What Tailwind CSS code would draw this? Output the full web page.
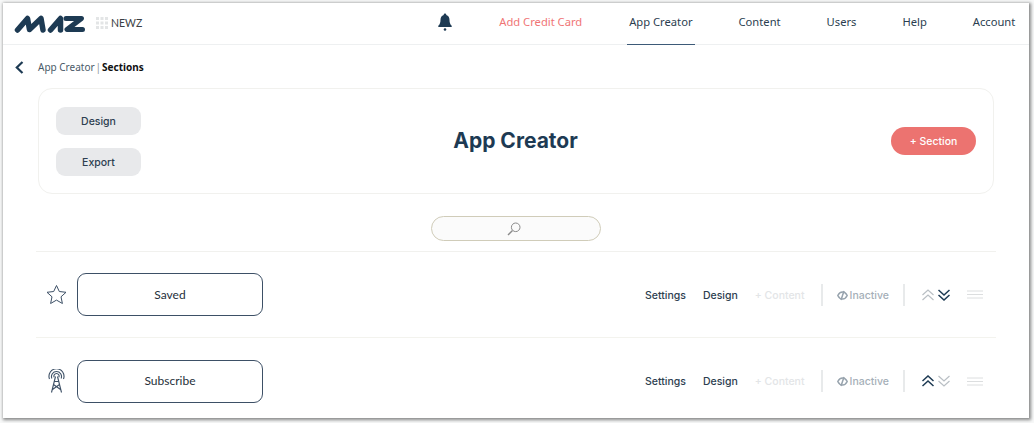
<!DOCTYPE html>
<html lang="en">
<head>
<meta charset="utf-8">
<title>App Creator</title>
<script src="https://cdn.jsdelivr.net/npm/@tailwindcss/browser@4"></script>
</head>
<body class="w-[1034px] h-[423px] overflow-hidden bg-[#f7f8f8] font-['Open_Sans',sans-serif]">
<div class="mt-[3px] ml-[3px] w-[1026px] h-[415px] overflow-hidden bg-white shadow-[1px_1px_3px_1px_rgba(0,0,0,0.45)]">

    <!-- top nav -->
    <header class="h-[41px] box-content border-b border-[#eef0f1] flex items-center pl-[11px]">
        <svg class="w-[71px] h-[18px]" viewBox="0 0 71 18" role="img" aria-label="MAZ logo" fill="none" stroke="#1d3a53" stroke-width="5.500" stroke-linecap="round" stroke-linejoin="round">
            <path d="M3.500 15 13.500 3.500 15.500 14.500 27 3.500 29 15"/>
            <path d="M36.500 15 46.500 3.500 46.500 15"/>
            <path d="M52 3.500H67.500L53 14.500H68.500" stroke-width="5"/>
        </svg>
        <svg class="ml-[11px] -mt-[1px] w-[12px] h-[12px]" viewBox="0 0 12 12" fill="#e3e5e6">
            <rect width="3" height="3"/><rect x="4.500" width="3" height="3"/><rect x="9" width="3" height="3"/>
            <rect y="4.500" width="3" height="3"/><rect x="4.500" y="4.500" width="3" height="3"/><rect x="9" y="4.500" width="3" height="3"/>
            <rect y="9" width="3" height="3"/><rect x="4.500" y="9" width="3" height="3"/><rect x="9" y="9" width="3" height="3"/>
        </svg>
        <span class="ml-[3px] text-[10.500px] text-[#3a3f44] font-['Lato',sans-serif]">NEWZ</span>

        <svg class="ml-[296px] w-[14px] h-[18px] -mt-[4px]" viewBox="0 0 14 18" fill="#1d3a53">
            <path d="M7 0.500c.8 0 1.300.6 1.300 1.400 2.200.6 3.200 2.500 3.200 4.900 0 3 .7 4.600 2.200 6v1.200H.3v-1.200c1.500-1.400 2.200-3 2.200-6 0-2.400 1-4.300 3.200-4.900C5.700 1.100 6.200.5 7 .5z"/>
            <circle cx="7" cy="16.500" r="1.300"/>
        </svg>

        <nav class="h-full flex items-center text-[11.200px] text-[#2b3e50] font-['Noto_Sans',sans-serif]">
            <a class="ml-[47px] -mt-[3px] text-[#f07575]">Add Credit Card</a>
            <a class="ml-[45px] self-start h-[42px] flex items-center px-[2px] pb-[3px] border-b border-[#3d5a78]">App Creator</a>
            <a class="ml-[44px] -mt-[3px]">Content</a>
            <a class="ml-[46px] -mt-[3px]">Users</a>
            <a class="ml-[46px] -mt-[3px]">Help</a>
            <a class="ml-[46px] -mt-[3px]">Account</a>
        </nav>
    </header>

    <!-- breadcrumb -->
    <div class="h-[43px] pt-[2px] flex items-center pl-[12px] text-[10px] font-['Noto_Sans',sans-serif]">
        <svg class="w-[9px] h-[13px]" viewBox="0 0 9 13" fill="none" stroke="#1d3a53" stroke-width="2.200"><path d="M7.500 1 1.800 6.500 7.500 12"/></svg>
        <span class="ml-[14px] text-[#4a5a68]">App Creator</span>
        <span class="mx-[1px] text-[#8c959c]">|</span>
        <b class="text-[#111] font-bold">Sections</b>
    </div>

    <!-- title card -->
    <section class="ml-[35px] w-[956px] h-[106px] border border-[#f1f1ee] rounded-[14px] flex items-center justify-between pl-[17px] pr-[17px]">
        <div class="flex flex-col gap-[13px] w-[85px]">
            <button class="h-[28px] pt-[2px] rounded-[9px] bg-[#e8e9eb] text-[10.500px] font-medium text-[#2d3e50] font-['Inter',sans-serif]">Design</button>
            <button class="h-[28px] pt-[2px] rounded-[9px] bg-[#e8e9eb] text-[10.500px] font-medium text-[#2d3e50] font-['Inter',sans-serif]">Export</button>
        </div>
        <h1 class="-ml-[1px] text-[21px] font-bold text-[#1d3a53] font-['Inter',sans-serif]">App Creator</h1>
        <button class="w-[85px] h-[28px] pt-[1px] rounded-full bg-[#ec7370] text-white text-[10.500px] font-medium font-['Inter',sans-serif]">+ Section</button>
    </section>

    <!-- search -->
    <div class="mt-[22px] ml-[428px] w-[170px] h-[25px] rounded-full border border-[#d0ccb9] bg-[#fbfbfb] flex items-center justify-center">
        <svg class="-ml-[5px] w-[14px] h-[14px]" viewBox="0 0 14 14" fill="none" stroke="#8a8a8a"><circle cx="8.700" cy="5.300" r="4.300"/><path d="M5.500 8.500 1 13" stroke-width="1.400"/></svg>
    </div>

    <!-- sections -->
    <div class="mt-[10px] ml-[33px] w-[960px] border-t border-[#f1f1ee]">
        <div class="h-[86px] border-b border-[#f3f3ee] flex items-center">
            <div class="w-[41px] flex justify-center">
                <svg class="-ml-[1px] w-[21px] h-[21px]" viewBox="0 0 21 21" fill="none" stroke="#3d5066" stroke-linejoin="round"><path d="M10.500 1.500 13.300 7.500 20 8.300 15 12.800 16.400 19.500 10.500 16.100 4.600 19.500 6 12.800 1 8.300 7.700 7.500z"/></svg>
            </div>
            <div class="w-[186px] h-[43px] rounded-[9px] border-[1.500px] border-[#3d5066] flex items-center justify-center text-[12px] text-[#26303a] font-['Lato',sans-serif]">Saved</div>
            <div class="ml-[382px] h-[22px] flex items-center text-[10.500px] font-medium font-['Inter',sans-serif]">
                <span class="pt-[2px] text-[#2d3e50]">Settings</span>
                <span class="pt-[2px] ml-[17px] text-[#2d3e50]">Design</span>
                <span class="pt-[2px] ml-[17px] text-[#e3e5e7]">+ Content</span>
                <span class="ml-[16px] w-[2px] h-[22px] bg-[#e8eaeb]"></span>
                <svg class="ml-[14px] mt-[1px] w-[11px] h-[11px]" viewBox="0 0 11 11" fill="none" stroke="#97a3ad" stroke-width="1.500"><path d="M.8 5.500C2 3 3.800 2 5.500 2s3.500 1 4.700 3.500C9 8 7.200 9 5.500 9S2 8 .8 5.500z"/><path d="M7 1 4 10"/></svg>
                <span class="pt-[2px] ml-[2px] text-[#a5afb8]">Inactive</span>
                <span class="ml-[14px] w-[2px] h-[22px] bg-[#e8eaeb]"></span>
                <svg class="ml-[17px] w-[12px] h-[12px]" viewBox="0 0 12 12" fill="none" stroke="#b9bfc4" stroke-width="1.200"><path d="M.5 6 6 1 11.500 6M.5 11 6 6 11.500 11"/></svg>
                <svg class="ml-[4px] w-[12px] h-[12px]" viewBox="0 0 12 12" fill="none" stroke="#1d3a53" stroke-width="1.500"><path d="M.5 1 6 6 11.500 1M.5 6 6 11 11.500 6"/></svg>
                <svg class="ml-[17px] w-[16px] h-[9px]" viewBox="0 0 16 9" fill="none" stroke="#dcdedf"><path d="M0 1H16M0 4.500H16M0 8H16"/></svg>
            </div>
        </div>
        <div class="h-[86px] flex items-center">
            <div class="w-[41px] flex justify-center">
                <svg class="-ml-[1px] w-[17px] h-[24px]" viewBox="0 0 17 24" fill="none" stroke="#3d5066" stroke-width="1.100"><path d="M1.500 10a7.500 7.500 0 1 1 14 0M3.900 9.500a5 5 0 1 1 9.200 0M6.200 8.300a2.600 2.600 0 1 1 4.600 0"/><path d="M7.500 7.500 3.500 23.500M9.500 7.500 13.500 23.500M6.500 12.500H10.500M5.500 15.500 12.500 20.500M11.500 15.500 4.500 20.500"/></svg>
            </div>
            <div class="w-[186px] h-[43px] rounded-[9px] border-[1.500px] border-[#3d5066] flex items-center justify-center text-[12px] text-[#26303a] font-['Lato',sans-serif]">Subscribe</div>
            <div class="ml-[382px] h-[22px] flex items-center text-[10.500px] font-medium font-['Inter',sans-serif]">
                <span class="pt-[2px] text-[#2d3e50]">Settings</span>
                <span class="pt-[2px] ml-[17px] text-[#2d3e50]">Design</span>
                <span class="pt-[2px] ml-[17px] text-[#e3e5e7]">+ Content</span>
                <span class="ml-[16px] w-[2px] h-[22px] bg-[#e8eaeb]"></span>
                <svg class="ml-[14px] mt-[1px] w-[11px] h-[11px]" viewBox="0 0 11 11" fill="none" stroke="#97a3ad" stroke-width="1.500"><path d="M.8 5.500C2 3 3.800 2 5.500 2s3.500 1 4.700 3.500C9 8 7.200 9 5.500 9S2 8 .8 5.500z"/><path d="M7 1 4 10"/></svg>
                <span class="pt-[2px] ml-[2px] text-[#a5afb8]">Inactive</span>
                <span class="ml-[14px] w-[2px] h-[22px] bg-[#e8eaeb]"></span>
                <svg class="ml-[17px] w-[12px] h-[12px]" viewBox="0 0 12 12" fill="none" stroke="#1d3a53" stroke-width="1.500"><path d="M.5 6 6 1 11.500 6M.5 11 6 6 11.500 11"/></svg>
                <svg class="ml-[4px] w-[12px] h-[12px]" viewBox="0 0 12 12" fill="none" stroke="#b9bfc4" stroke-width="1.200"><path d="M.5 1 6 6 11.500 1M.5 6 6 11 11.500 6"/></svg>
                <svg class="ml-[17px] w-[16px] h-[9px]" viewBox="0 0 16 9" fill="none" stroke="#dcdedf"><path d="M0 1H16M0 4.500H16M0 8H16"/></svg>
            </div>
        </div>
    </div>
</div>
</body>
</html>
